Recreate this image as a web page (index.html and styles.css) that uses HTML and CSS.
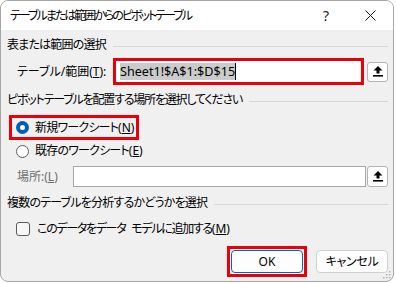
FILE: index.html
```html
<!DOCTYPE html>
<html lang="ja">
<head>
<meta charset="utf-8">
<link rel="stylesheet" href="styles.css">
</head>
<body>
<div class="window">
  <div class="titlebar">
    <span class="title">テーブルまたは範囲からのピボットテーブル</span>
    <span class="help">?</span>
    <span class="close"><svg width="11" height="11" viewBox="0 0 11 11"><path d="M0.5 0.5 L10.5 10.5 M10.5 0.5 L0.5 10.5" stroke="#1a1a1a" stroke-width="1" fill="none"/></svg></span>
  </div>
  <div class="content">
    <div class="group-head"><span>表または範囲の選択</span><div class="rule"></div></div>
    <div class="range-row">
      <span class="lbl">テーブル/範囲(<u>T</u>):</span>
      <div class="range-box"><span class="sel">Sheet1!$A$1:$D$15</span><span class="caret"></span></div>
      <span class="pick"><svg width="10" height="11" viewBox="0 0 10 11"><path d="M5 0 L9.5 4.5 L6.5 4.5 L6.5 7.5 L3.5 7.5 L3.5 4.5 L0.5 4.5 Z" fill="#000"/><rect x="0" y="9" width="10" height="1.6" fill="#000"/></svg></span>
    </div>

    <div class="group-head head2"><span>ピボットテーブルを配置する場所を選択してください</span><div class="rule"></div></div>
    <div class="radio-hl">
      <span class="radio on"></span><span class="opt">新規ワークシート<span class="acc">(<u>N</u>)</span></span>
    </div>
    <div class="radio-row">
      <span class="radio"></span><span class="opt">既存のワークシート<span class="acc">(<u>E</u>)</span></span>
    </div>
    <div class="loc-row">
      <span class="lbl dim">場所:(<u>L</u>)</span>
      <div class="loc-input"></div>
      <span class="pick pick2"><svg width="10" height="11" viewBox="0 0 10 11"><path d="M5 0 L9.5 4.5 L6.5 4.5 L6.5 7.5 L3.5 7.5 L3.5 4.5 L0.5 4.5 Z" fill="#000"/><rect x="0" y="9" width="10" height="1.6" fill="#000"/></svg></span>
    </div>

    <div class="group-head head3"><span>複数のテーブルを分析するかどうかを選択</span><div class="rule"></div></div>
    <div class="check-row">
      <span class="check"></span><span class="opt check-text">このデータをデータ モデルに追加する<span class="acc">(<u>M</u>)</span></span>
    </div>

    <div class="footer">
      <div class="ok-hl"><span class="btn ok">OK</span></div>
      <span class="btn cancel">キャンセル</span>
    </div>
  </div>
  <svg class="grip" width="8" height="8" viewBox="0 0 8 8">
    <rect x="6" y="0" width="1.5" height="1.5" fill="#b0b0b0"/>
    <rect x="3" y="3" width="1.5" height="1.5" fill="#b0b0b0"/>
    <rect x="6" y="3" width="1.5" height="1.5" fill="#b0b0b0"/>
    <rect x="0" y="6" width="1.5" height="1.5" fill="#b0b0b0"/>
    <rect x="3" y="6" width="1.5" height="1.5" fill="#b0b0b0"/>
    <rect x="6" y="6" width="1.5" height="1.5" fill="#b0b0b0"/>
  </svg>
</div>
</body>
</html>
```

FILE: styles.css
```css
* { box-sizing: border-box; }
html, body { margin: 0; padding: 0; background: #ffffff; }
body {
  font-family: "Noto Sans", "Noto Sans CJK JP", sans-serif;
  font-size: 12px;
  color: #000;
  font-feature-settings: "palt";
  letter-spacing: -0.8px;
  white-space: nowrap;
}
u { text-decoration: underline; text-underline-offset: 1px; }
.acc { letter-spacing: 0; }

.window {
  position: relative;
  width: 394px;
  height: 282px;
  border: 1px solid #a6a6a6;
  border-radius: 8px;
  background: #f0f0f0;
  overflow: hidden;
  display: flex;
  flex-direction: column;
}

.titlebar {
  height: 29px;
  background: #ffffff;
  display: flex;
  align-items: center;
  padding-left: 9px;
  flex-shrink: 0;
}
.title { flex: 1; line-height: 16px; letter-spacing: -2px; }
.help {
  font-size: 14px;
  font-family: "Noto Sans", sans-serif;
  letter-spacing: 0;
  width: 12px;
  margin-right: 30px;
  color: #1a1a1a;
}
.close { width: 11px; height: 11px; margin-right: 17px; display: flex; }

.content {
  flex: 1;
  display: flex;
  flex-direction: column;
  padding: 0 5px 0 6px;
}

.group-head {
  display: flex;
  align-items: center;
  height: 16px;
  line-height: 16px;
  margin-top: 7px;
}
.group-head .rule {
  flex: 1;
  height: 1px;
  background: #d8d8d8;
  margin-left: 7px;
  margin-top: 3px;
}
.head2 span { letter-spacing: -1.2px; }
.head3 { margin-top: 8px; }

.range-row {
  display: flex;
  align-items: center;
  margin-top: 5px;
  height: 27px;
}
.lbl { width: 106px; padding-left: 10px; line-height: 16px; letter-spacing: 0; }
.range-box {
  width: 251px;
  height: 27px;
  border: 3px solid #e8000b;
  background: #fff;
  padding-left: 4px;
  display: flex;
  align-items: center;
}
.sel {
  background: #cbcbcb;
  line-height: 17px;
  height: 17px;
  font-size: 12.6px;
  letter-spacing: 0;
}
.caret { width: 1px; height: 17px; background: #000; }

.pick {
  width: 21px;
  height: 20px;
  margin-left: 3px;
  background: #fff;
  border: 1px solid #b4b4b4;
  border-radius: 3px;
  display: flex;
  align-items: center;
  justify-content: center;
}

.radio-hl {
  display: flex;
  align-items: center;
  margin-top: 7px;
  margin-left: 2px;
  width: 130px;
  height: 25px;
  border: 3px solid #e8000b;
  padding-left: 4px;
}
.radio-row {
  display: flex;
  align-items: center;
  margin-top: 2px;
  height: 18px;
  padding-left: 9px;
}
.radio {
  width: 13px;
  height: 13px;
  border-radius: 50%;
  border: 1px solid #5f5f5f;
  background: #fff;
  margin-right: 6px;
  flex-shrink: 0;
}
.radio.on {
  border: 4px solid #005fb8;
  background: #fff;
}
.opt { line-height: 16px; }

.loc-row {
  display: flex;
  align-items: center;
  margin-top: 6px;
  height: 21px;
}
.dim { color: #6d6d6d; width: 66px; }
.loc-input {
  flex: 1;
  height: 21px;
  background: #fff;
  border: 1px solid #a8a8a8;
}
.pick2 { height: 21px; margin-left: 1px; }

.check-row {
  display: flex;
  align-items: center;
  margin-top: 9px;
  height: 18px;
  padding-left: 9px;
}
.check {
  width: 14px;
  height: 14px;
  border: 1px solid #5a5a5a;
  border-radius: 3px;
  background: #f7f7f7;
  margin-right: 7px;
}
.check-text { letter-spacing: -1.3px; word-spacing: 4px; }

.footer {
  display: flex;
  justify-content: flex-end;
  align-items: center;
  margin-top: 8px;
}
.ok-hl {
  border: 3px solid #e8000b;
  padding: 1px;
  display: flex;
}
.btn {
  width: 72px;
  height: 23px;
  display: flex;
  align-items: center;
  justify-content: center;
  background: #fdfdfd;
  border-radius: 4px;
  line-height: 16px;
}
.ok { border: 1px solid #0067c0; letter-spacing: 0; }
.cancel { border: 1px solid #d0d0d0; margin-left: 9px; letter-spacing: -0.3px; }

.grip { position: absolute; right: 2px; bottom: 2px; }
```
